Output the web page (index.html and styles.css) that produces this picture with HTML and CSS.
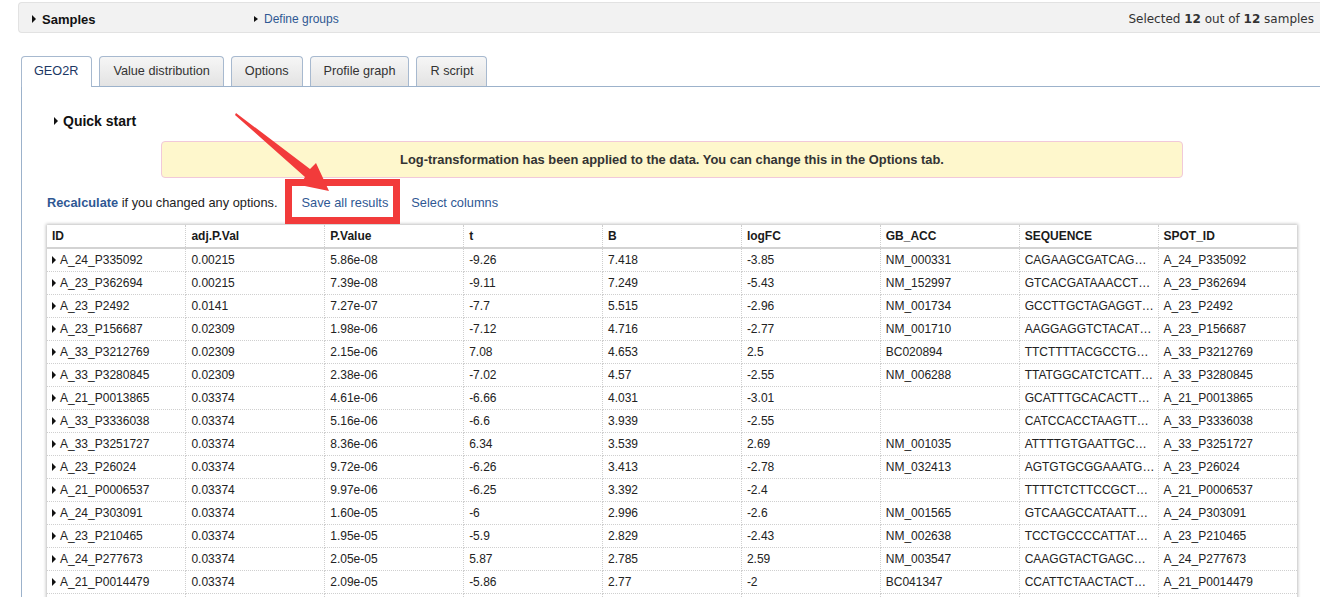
FILE: index.html
```html
<!DOCTYPE html>
<html>
<head>
<meta charset="utf-8">
<title>GEO2R</title>
<link rel="stylesheet" href="styles.css">
</head>
<body>
<div class="samples-bar">
  <div class="sb-left"><span class="tri"></span><b>Samples</b></div>
  <div class="sb-groups"><span class="tri tri-sm"></span><a class="link">Define groups</a></div>
  <div class="sb-right">Selected <b>12</b> out of <b>12</b> samples</div>
</div>

<div class="tabs">
  <div class="tab active">GEO2R</div>
  <div class="tab">Value distribution</div>
  <div class="tab">Options</div>
  <div class="tab">Profile graph</div>
  <div class="tab">R script</div>
</div>

<div class="panel">
  <div class="quick"><span class="tri"></span>Quick start</div>
  <div class="notice">Log-transformation has been applied to the data. You can change this in the Options tab.</div>
  <div class="actions">
    <a class="link recalc">Recalculate</a><span class="plain">&nbsp;if you changed any options.</span>
    <a class="link save">Save all results</a>
    <a class="link select">Select columns</a>
  </div>
  <table class="results">
    <thead>
      <tr><th>ID</th><th>adj.P.Val</th><th>P.Value</th><th>t</th><th>B</th><th>logFC</th><th>GB_ACC</th><th>SEQUENCE</th><th>SPOT_ID</th></tr>
    </thead>
    <tbody>
      <tr><td><span class="tri"></span>A_24_P335092</td><td>0.00215</td><td>5.86e-08</td><td>-9.26</td><td>7.418</td><td>-3.85</td><td>NM_000331</td><td>CAGAAGCGATCAG…</td><td>A_24_P335092</td></tr>
      <tr><td><span class="tri"></span>A_23_P362694</td><td>0.00215</td><td>7.39e-08</td><td>-9.11</td><td>7.249</td><td>-5.43</td><td>NM_152997</td><td>GTCACGATAAACCT…</td><td>A_23_P362694</td></tr>
      <tr><td><span class="tri"></span>A_23_P2492</td><td>0.0141</td><td>7.27e-07</td><td>-7.7</td><td>5.515</td><td>-2.96</td><td>NM_001734</td><td>GCCTTGCTAGAGGT…</td><td>A_23_P2492</td></tr>
      <tr><td><span class="tri"></span>A_23_P156687</td><td>0.02309</td><td>1.98e-06</td><td>-7.12</td><td>4.716</td><td>-2.77</td><td>NM_001710</td><td>AAGGAGGTCTACAT…</td><td>A_23_P156687</td></tr>
      <tr><td><span class="tri"></span>A_33_P3212769</td><td>0.02309</td><td>2.15e-06</td><td>7.08</td><td>4.653</td><td>2.5</td><td>BC020894</td><td>TTCTTTTACGCCTG…</td><td>A_33_P3212769</td></tr>
      <tr><td><span class="tri"></span>A_33_P3280845</td><td>0.02309</td><td>2.38e-06</td><td>-7.02</td><td>4.57</td><td>-2.55</td><td>NM_006288</td><td>TTATGGCATCTCATT…</td><td>A_33_P3280845</td></tr>
      <tr><td><span class="tri"></span>A_21_P0013865</td><td>0.03374</td><td>4.61e-06</td><td>-6.66</td><td>4.031</td><td>-3.01</td><td></td><td>GCATTTGCACACTT…</td><td>A_21_P0013865</td></tr>
      <tr><td><span class="tri"></span>A_33_P3336038</td><td>0.03374</td><td>5.16e-06</td><td>-6.6</td><td>3.939</td><td>-2.55</td><td></td><td>CATCCACCTAAGTT…</td><td>A_33_P3336038</td></tr>
      <tr><td><span class="tri"></span>A_33_P3251727</td><td>0.03374</td><td>8.36e-06</td><td>6.34</td><td>3.539</td><td>2.69</td><td>NM_001035</td><td>ATTTTGTGAATTGC…</td><td>A_33_P3251727</td></tr>
      <tr><td><span class="tri"></span>A_23_P26024</td><td>0.03374</td><td>9.72e-06</td><td>-6.26</td><td>3.413</td><td>-2.78</td><td>NM_032413</td><td>AGTGTGCGGAAATG…</td><td>A_23_P26024</td></tr>
      <tr><td><span class="tri"></span>A_21_P0006537</td><td>0.03374</td><td>9.97e-06</td><td>-6.25</td><td>3.392</td><td>-2.4</td><td></td><td>TTTTCTCTTCCGCT…</td><td>A_21_P0006537</td></tr>
      <tr><td><span class="tri"></span>A_24_P303091</td><td>0.03374</td><td>1.60e-05</td><td>-6</td><td>2.996</td><td>-2.6</td><td>NM_001565</td><td>GTCAAGCCATAATT…</td><td>A_24_P303091</td></tr>
      <tr><td><span class="tri"></span>A_23_P210465</td><td>0.03374</td><td>1.95e-05</td><td>-5.9</td><td>2.829</td><td>-2.43</td><td>NM_002638</td><td>TCCTGCCCCATTAT…</td><td>A_23_P210465</td></tr>
      <tr><td><span class="tri"></span>A_24_P277673</td><td>0.03374</td><td>2.05e-05</td><td>5.87</td><td>2.785</td><td>2.59</td><td>NM_003547</td><td>CAAGGTACTGAGC…</td><td>A_24_P277673</td></tr>
      <tr><td><span class="tri"></span>A_21_P0014479</td><td>0.03374</td><td>2.09e-05</td><td>-5.86</td><td>2.77</td><td>-2</td><td>BC041347</td><td>CCATTCTAACTACT…</td><td>A_21_P0014479</td></tr>
      <tr class="cut-row"><td></td><td></td><td></td><td></td><td></td><td></td><td></td><td></td><td></td></tr>
    </tbody>
  </table>
</div>

<div class="callout-box"></div>
<svg class="callout-arrow" width="1320" height="597" viewBox="0 0 1320 597">
  <polygon points="236,113 310,169 316,163 329,191 300,185 305,177 235,115" fill="#f23b3b"/>
</svg>
</body>
</html>
```

FILE: styles.css
```css
html, body {
  margin: 0;
  padding: 0;
  overflow: hidden;
  background: #ffffff;
}

body {
  font-family: "Liberation Sans", Arial, sans-serif;
  font-size: 12px;
  color: #222222;
  width: 1320px;
  height: 597px;
  position: relative;
}

.link {
  color: #2f5893;
  text-decoration: none;
  cursor: pointer;
}

.tri {
  display: inline-block;
  width: 0;
  height: 0;
  border-left: 4px solid #111111;
  border-top: 4px solid transparent;
  border-bottom: 4px solid transparent;
  vertical-align: middle;
  margin-right: 6px;
  position: relative;
  top: -1px;
}

.tri-sm {
  border-left-width: 4px;
  border-top-width: 3.5px;
  border-bottom-width: 3.5px;
}

/* Samples bar */
.samples-bar {
  margin: 2px 0 0 18px;
  height: 26px;
  padding-top: 3px;
  background: #f2f2f2;
  border: 1px solid #e2e2e2;
  border-right: none;
  border-radius: 4px 0 0 4px;
  display: flex;
  align-items: center;
}

.sb-left {
  width: 235px;
  box-sizing: border-box;
  padding-left: 13px;
  font-size: 13px;
  color: #111111;
  display: flex;
  align-items: center;
}

.sb-left .tri {
  margin-right: 6px;
  top: 0;
}

.sb-groups {
  display: flex;
  align-items: center;
  font-size: 12px;
}

.sb-groups .tri {
  margin-right: 6px;
  top: 0;
}

.sb-right {
  margin-left: auto;
  padding-right: 6px;
  font-family: "DejaVu Sans", Verdana, sans-serif;
  font-size: 12px;
  color: #333333;
}

/* Tabs */
.tabs {
  margin: 23px 0 0 21px;
  display: flex;
  gap: 7px;
  align-items: flex-end;
  position: relative;
  z-index: 2;
}

.tab {
  height: 29px;
  line-height: 28px;
  padding: 0 13px;
  font-size: 12.7px;
  color: #333333;
  border: 1px solid #a7b9cf;
  border-bottom: none;
  border-radius: 4px 4px 0 0;
  background: linear-gradient(#f6f6f6, #e3e3e3);
}

.tab.active {
  background: #ffffff;
  color: #1c3764;
  height: 30px;
  margin-bottom: -1px;
  padding: 0 13px 0 12px;
}

/* Panel */
.panel {
  margin-left: 21px;
  border-top: 1px solid #9cb2cb;
  border-left: 1px solid #9cb2cb;
  padding-top: 25px;
  height: 600px;
}

.quick {
  padding-left: 32px;
  font-size: 14px;
  font-weight: bold;
  color: #111111;
  line-height: 18px;
  display: flex;
  align-items: center;
}

.quick .tri {
  top: 0;
  margin-right: 5px;
}

.notice {
  margin: 11px 0 0 139px;
  width: 1020px;
  height: 35px;
  line-height: 35px;
  text-align: center;
  background: #fef7cc;
  border: 1px solid #f1c9d9;
  border-radius: 4px;
  font-size: 12.9px;
  font-weight: bold;
  color: #333333;
}

.actions {
  margin: 16px 0 0 25px;
  line-height: 18px;
  font-size: 12.8px;
  color: #222222;
  display: flex;
}

.recalc {
  font-weight: bold;
}

.save {
  margin-left: 24px;
}

.select {
  margin-left: 23px;
}

/* Results table */
.results {
  margin: 13px 0 0 25px;
  width: 1250px;
  table-layout: fixed;
  border-collapse: collapse;
  box-shadow: 0 0 3px 1px rgba(0, 0, 0, 0.25);
  font-size: 12px;
  color: #222222;
}

.results th,
.results td {
  text-align: left;
  padding: 0 5px;
  white-space: nowrap;
  overflow: hidden;
  border-right: 1px dotted #cfcfcf;
}

.results th:last-child,
.results td:last-child {
  border-right: none;
}

.results th {
  height: 22px;
  font-weight: bold;
  color: #1a1a1a;
  border-bottom: 2px solid #d3d3d3;
}

.results td {
  height: 22px;
  border-bottom: 1px dotted #cfcfcf;
}

.results td .tri {
  margin-right: 4px;
  border-left-color: #111111;
}

/* Annotation overlay */
.callout-box {
  position: absolute;
  left: 285px;
  top: 179px;
  width: 101px;
  height: 31px;
  border: 7px solid #f23b3b;
}

.callout-arrow {
  position: absolute;
  left: 0;
  top: 0;
  pointer-events: none;
}
```
